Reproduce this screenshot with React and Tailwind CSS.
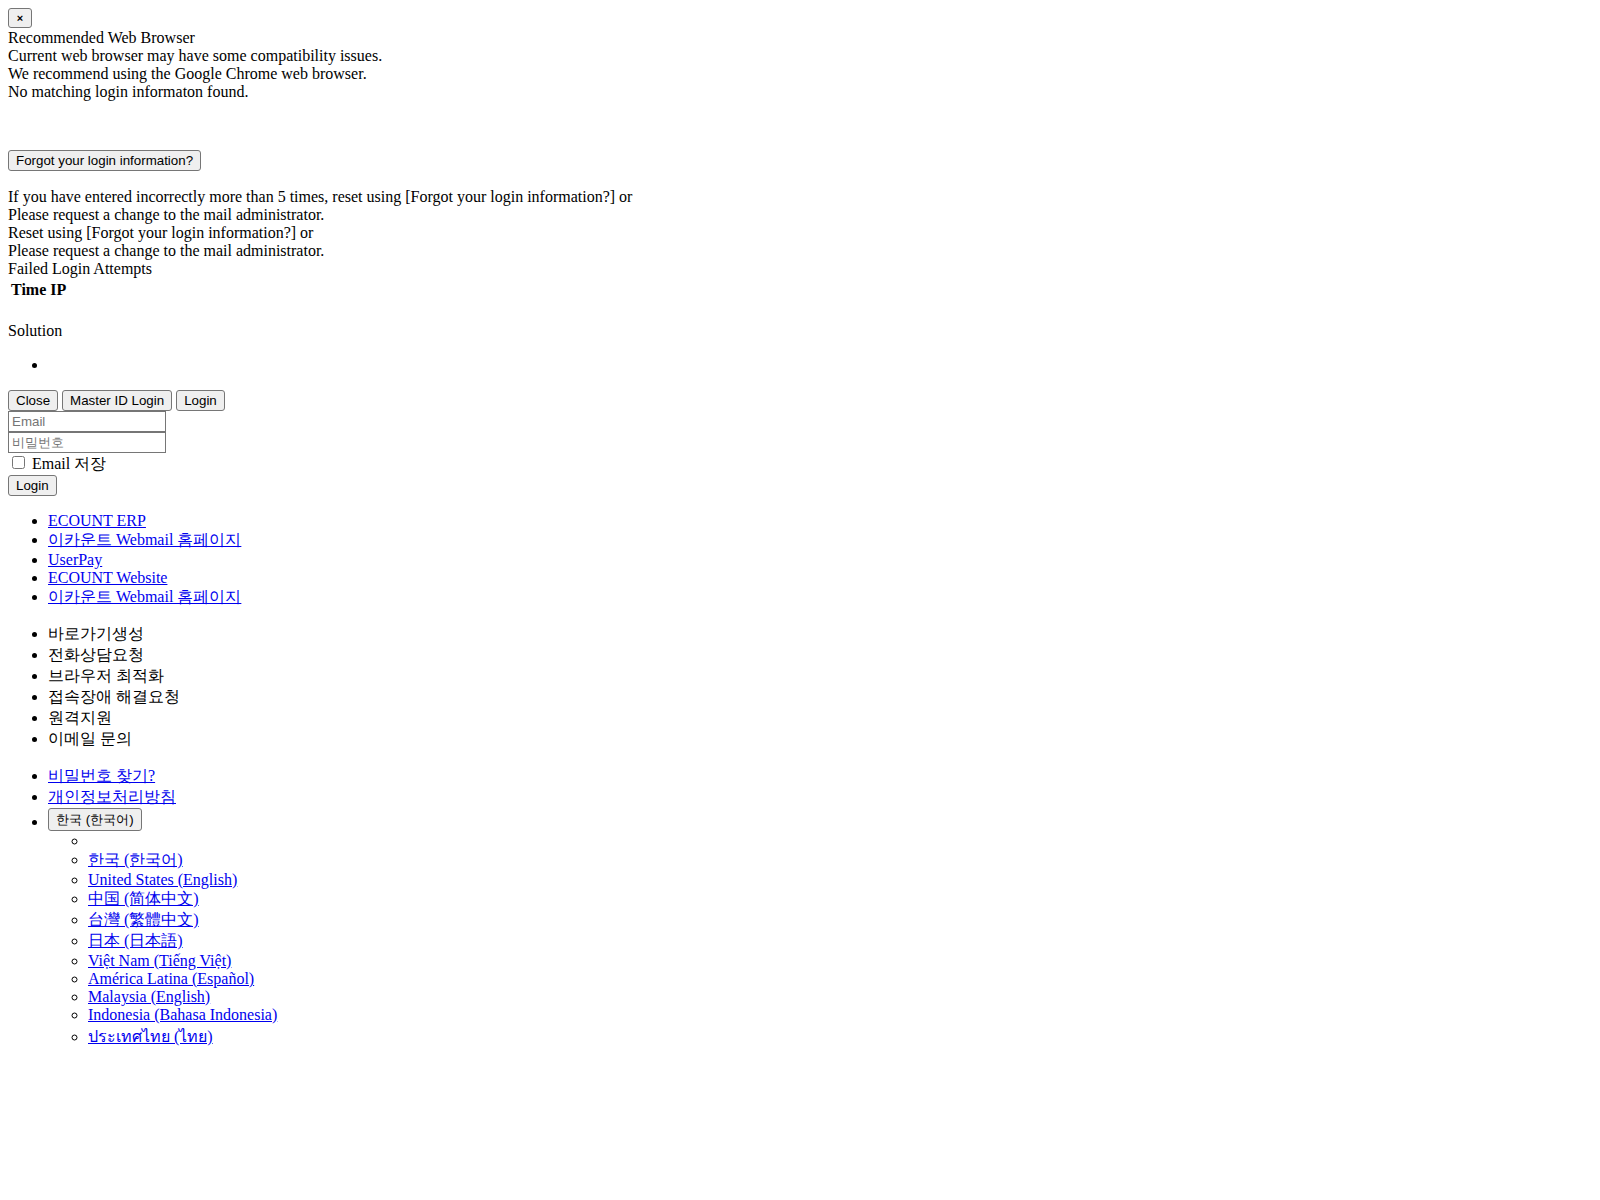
import React from "react";

const btn =
  "inline-block align-bottom bg-[#efefef] border border-[#767676] rounded-[3px] px-[7px] py-[2px] text-[13.333px] leading-[15px] text-black font-['Liberation_Sans',sans-serif]";
const link = "text-[#0000ee] underline";

export default function App() {
  return (
    <div className="min-h-[1200px] bg-white p-2 text-[16px] leading-[normal] text-black font-['Liberation_Serif',serif]">
      <div className="h-[21px]">
        <button className="w-[24px] h-[20px] bg-[#efefef] border border-[#767676] rounded-[3px] text-[11px] leading-[16px] font-['Liberation_Sans',sans-serif] font-bold">
          ×
        </button>
      </div>
      <div>Recommended Web Browser</div>
      <div>Current web browser may have some compatibility issues.</div>
      <div>We recommend using the Google Chrome web browser.</div>
      <div>No matching login informaton found.</div>

      <div className="mt-[49px] h-[21px]">
        <button className={btn}>Forgot your login information?</button>
      </div>

      <div className="mt-[17px]">
        <div>
          If you have entered incorrectly more than 5 times, reset using [Forgot your login information?] or
        </div>
        <div>Please request a change to the mail administrator.</div>
        <div>Reset using [Forgot your login information?] or</div>
        <div>Please request a change to the mail administrator.</div>
        <div>Failed Login Attempts</div>
      </div>

      <table className="border-separate border-spacing-[2px]">
        <thead>
          <tr>
            <th className="p-[1px] font-bold text-left">Time</th>
            <th className="p-[1px] font-bold text-left">IP</th>
          </tr>
        </thead>
      </table>

      <div className="mt-[20px]">Solution</div>
      <ul className="list-disc pl-10 my-4">
        <li className="h-[18px]"></li>
      </ul>

      <div className="flex gap-[4px] h-[21px] mt-[1px]">
        <button className={btn}>Close</button>
        <button className={btn}>Master ID Login</button>
        <button className={btn}>Login</button>
      </div>
      <div>
        <input
          type="text"
          placeholder="Email"
          className="block w-[158px] h-[21px] border border-[#767676] px-[3px] text-[13.333px] font-['Liberation_Sans',sans-serif] placeholder:text-[#757575]"
        />
        <input
          type="password"
          placeholder="비밀번호"
          className="block w-[158px] h-[21px] border border-[#767676] px-[3px] text-[13.333px] font-['Liberation_Sans',sans-serif] placeholder:text-[#757575]"
        />
      </div>
      <div>
        <input type="checkbox" className="ml-[4px] mr-[3px] my-[3px] w-[13px] h-[13px] appearance-auto" />{" "}
        Email 저장
      </div>
      <div className="h-[21px]">
        <button className={btn}>Login</button>
      </div>

      <ul className="list-disc pl-10 my-4">
        <li><a className={link}>ECOUNT ERP</a></li>
        <li><a className={link}>이카운트 Webmail 홈페이지</a></li>
        <li><a className={link}>UserPay</a></li>
        <li><a className={link}>ECOUNT Website</a></li>
        <li><a className={link}>이카운트 Webmail 홈페이지</a></li>
      </ul>

      <ul className="list-disc pl-10 my-4">
        <li>바로가기생성</li>
        <li>전화상담요청</li>
        <li>브라우저 최적화</li>
        <li>접속장애 해결요청</li>
        <li>원격지원</li>
        <li>이메일 문의</li>
      </ul>

      <ul className="list-disc pl-10 my-4">
        <li><a className={link}>비밀번호 찾기?</a></li>
        <li><a className={link}>개인정보처리방침</a></li>
        <li>
          <div className="h-[24px]">
            <button className={btn + " h-[23px]"}>한국 (한국어)</button>
          </div>
          <ul className="list-[circle] pl-10">
            <li className="h-[18px]"></li>
            <li><a className={link}>한국 (한국어)</a></li>
            <li><a className={link}>United States (English)</a></li>
            <li><a className={link}>中国 (简体中文)</a></li>
            <li><a className={link}>台灣 (繁體中文)</a></li>
            <li><a className={link}>日本 (日本語)</a></li>
            <li><a className={link}>Việt Nam (Tiếng Việt)</a></li>
            <li><a className={link}>América Latina (Español)</a></li>
            <li><a className={link}>Malaysia (English)</a></li>
            <li><a className={link}>Indonesia (Bahasa Indonesia)</a></li>
            <li><a className={link}>ประเทศไทย (ไทย)</a></li>
          </ul>
        </li>
      </ul>
    </div>
  );
}
